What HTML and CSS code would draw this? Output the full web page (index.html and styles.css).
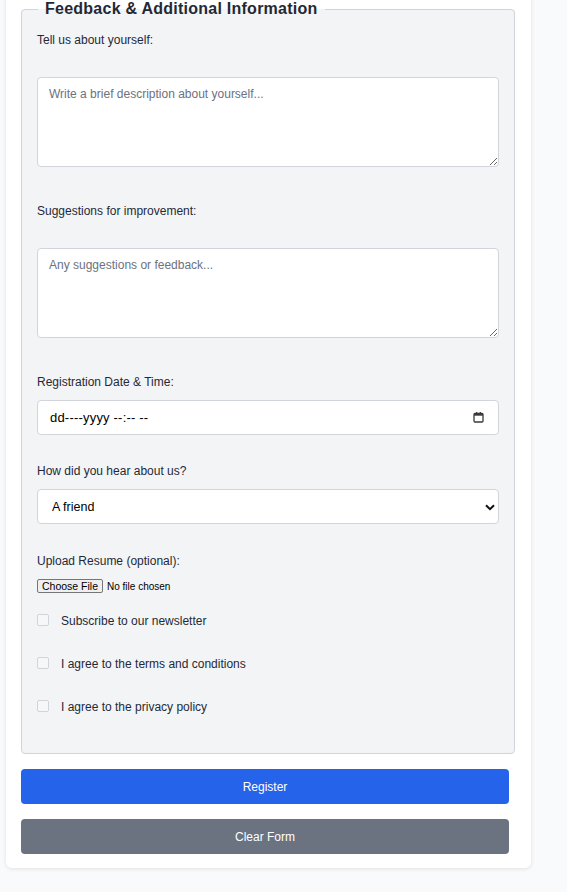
FILE: index.html
```html
<!DOCTYPE html>
<html lang="en">
<head>
<meta charset="utf-8">
<title>Registration</title>
<link rel="stylesheet" href="styles.css">
</head>
<body>
<form class="card">
  <fieldset class="group">
    <legend class="group-title">Feedback &amp; Additional Information</legend>
    <div class="stack">
      <div class="field field-area">
        <label class="label" for="about">Tell us about yourself:</label>
        <textarea class="area" id="about" placeholder="Write a brief description about yourself..."></textarea>
      </div>
      <div class="field field-area">
        <label class="label" for="sugg">Suggestions for improvement:</label>
        <textarea class="area" id="sugg" placeholder="Any suggestions or feedback..."></textarea>
      </div>
      <div class="field">
        <label class="label" for="dt">Registration Date &amp; Time:</label>
        <div class="control date" id="dt">
          <span class="date-text">dd----yyyy --:-- --</span>
          <svg class="cal" width="11" height="11" viewBox="0 0 11 11" aria-hidden="true"><rect x="1" y="1.5" width="9" height="8.5" rx="1" fill="none" stroke="#3a3a3a" stroke-width="1.3"/><rect x="1" y="1.5" width="9" height="2.2" fill="#3a3a3a"/><rect x="3" y="0" width="1.3" height="2" fill="#3a3a3a"/><rect x="6.7" y="0" width="1.3" height="2" fill="#3a3a3a"/></svg>
        </div>
      </div>
      <div class="field field-select">
        <label class="label" for="hear">How did you hear about us?</label>
        <div class="select-wrap">
          <select class="control select" id="hear">
            <option>A friend</option>
            <option>Social media</option>
            <option>Search engine</option>
          </select>
          <svg class="chev" width="10" height="7" viewBox="0 0 10 7" aria-hidden="true"><path d="M1 1.2 L5 5.2 L9 1.2" fill="none" stroke="#111" stroke-width="2"/></svg>
        </div>
      </div>
      <div class="field field-file">
        <label class="label" for="resume">Upload Resume (optional):</label>
        <input class="file" type="file" id="resume">
      </div>
      <div class="checks">
        <label class="check"><input class="box" type="checkbox"><span>Subscribe to our newsletter</span></label>
        <label class="check"><input class="box" type="checkbox"><span>I agree to the terms and conditions</span></label>
        <label class="check"><input class="box" type="checkbox"><span>I agree to the privacy policy</span></label>
      </div>
    </div>
  </fieldset>
  <div class="actions">
    <button type="submit" class="btn btn-primary">Register</button>
    <button type="reset" class="btn btn-secondary">Clear Form</button>
  </div>
</form>
</body>
</html>
```
FILE: styles.css
```css
html, body {
  margin: 0;
  padding: 0;
}
body {
  background: #f9fafb;
  font-family: "Liberation Sans", Arial, sans-serif;
  color: #1f2937;
  font-size: 12px;
}
.card {
  width: 525px;
  box-sizing: border-box;
  margin: -15px 0 24px 6px;
  padding: 15px 16px 14px 15px;
  background: #fff;
  border-radius: 6px;
  box-shadow: 0 1px 4px rgba(0,0,0,0.1);
}
.group {
  margin: 0;
  padding: 0 15px 37px 15px;
  background: #f3f4f6;
  border: 1px solid #d1d5db;
  border-radius: 4px;
}
.group-title {
  padding: 0 7px;
  margin-left: 1px;
  font-size: 16px;
  font-weight: 700;
  letter-spacing: 0.25px;
  line-height: 18px;
  color: #1f2937;
}
.stack {
  display: flex;
  flex-direction: column;
  padding-top: 13px;
}
.field {
  display: flex;
  flex-direction: column;
  gap: 9px;
  margin-bottom: 27px;
}
.field-area {
  margin-bottom: 35px;
}
.field-area .area {
  margin-top: 19px;
}
.field-select {
  margin-bottom: 28px;
}
.field-file {
  margin-bottom: 19px;
}
.label {
  display: block;
  line-height: 18px;
  font-size: 12px;
  color: #1f2937;
}
.area {
  display: block;
  box-sizing: border-box;
  width: 100%;
  height: 90px;
  margin: 0;
  padding: 9px 11px;
  border: 1px solid #d1d5db;
  border-radius: 4px;
  background: #fff;
  font-family: "Liberation Sans", Arial, sans-serif;
  font-size: 12px;
  line-height: 15px;
  color: #111827;
  resize: vertical;
}
.area::placeholder {
  color: #6b7280;
}
.control {
  box-sizing: border-box;
  width: 100%;
  border: 1px solid #d1d5db;
  border-radius: 4px;
  background: #fff;
  font-family: "Liberation Sans", Arial, sans-serif;
  font-size: 12px;
  color: #000;
}
.date {
  height: 35px;
  display: flex;
  align-items: center;
  justify-content: space-between;
  padding: 0 14px 0 12px;
}
.date-text {
  font-size: 13px;
  letter-spacing: 0.2px;
}
.cal {
  display: block;
}
.select-wrap {
  position: relative;
}
.select {
  display: block;
  height: 35px;
  padding: 0 14px;
  appearance: none;
  -webkit-appearance: none;
  font-size: 12.5px;
}
.chev {
  position: absolute;
  right: 4px;
  top: 15px;
}
.file {
  font-family: "Liberation Sans", Arial, sans-serif;
  font-size: 10px;
  height: 14px;
  margin: 0;
  color: #000;
}
.file::file-selector-button {
  font-family: "Liberation Sans", Arial, sans-serif;
  font-size: 10.5px;
  padding: 0 4px;
  margin-right: 4px;
  border: 1px solid #767676;
  border-radius: 2px;
  background: #efefef;
  height: 14px;
}
.checks {
  display: flex;
  flex-direction: column;
  gap: 25px;
}
.check {
  display: flex;
  align-items: center;
  gap: 12px;
  line-height: 18px;
  font-size: 12px;
  color: #1f2937;
}
.box {
  appearance: none;
  -webkit-appearance: none;
  width: 12px;
  height: 12px;
  margin: -2px 0 0 0;
  border: 1px solid #d1d5db;
  border-radius: 2px;
  background: #f6f7f8;
}
.actions {
  display: flex;
  flex-direction: column;
  gap: 15px;
  padding: 15px 6px 0 0;
}
.btn {
  height: 35px;
  border: none;
  border-radius: 4px;
  color: #fff;
  font-family: "Liberation Sans", Arial, sans-serif;
  font-size: 12px;
  cursor: pointer;
}
.btn-primary {
  background: #2563eb;
}
.btn-secondary {
  background: #6b7280;
}
```
